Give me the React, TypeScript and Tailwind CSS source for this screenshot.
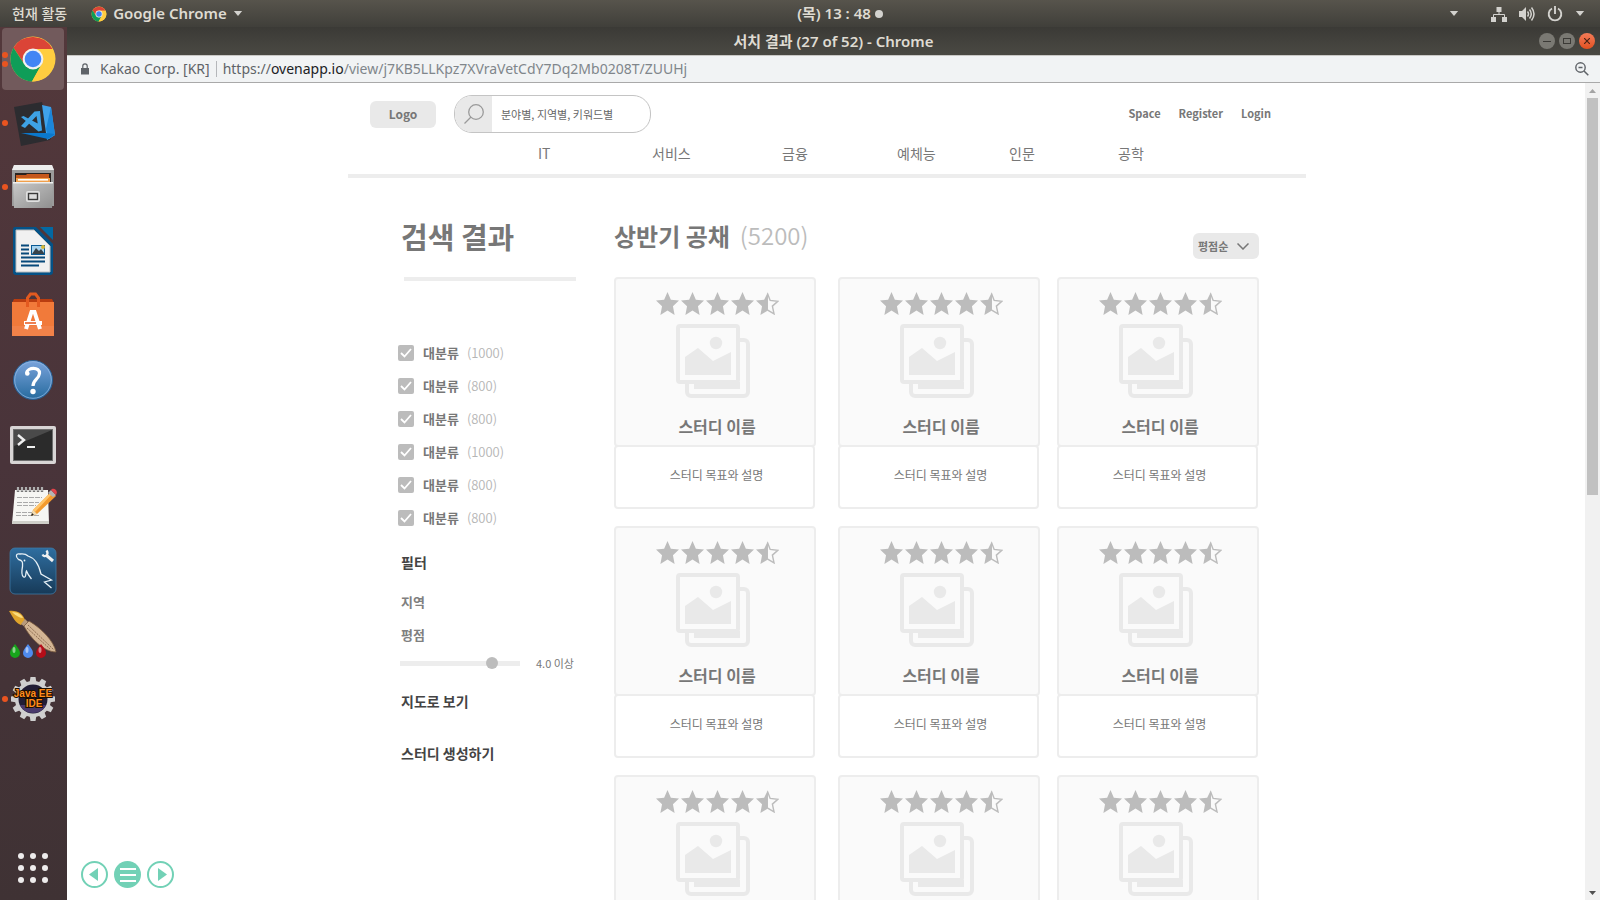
import { useState } from "react";

const kr = "font-['Noto_Sans_CJK_KR',sans-serif]";

/* ---------- launcher drawings, each on a 48 x 48 grid ---------- */

function ChromeIcon({ className }: { className: string }) {
  return (
    <svg viewBox="0 0 48 48" className={className} aria-hidden="true">
      <circle cx="24" cy="24" r="22.5" fill="#FFCD40" />
      <path d="M4.5 12.8A22.5 22.5 0 0 1 43.5 14H24a10.2 10.2 0 0 0-9.2 14.3z" fill="#DB4437" />
      <path d="M4.5 12.8A22.5 22.5 0 0 0 23 46.5L32.7 29a10.2 10.2 0 0 1-17.5 0z" fill="#0F9D58" />
      <path d="M32.8 29 23 46.5A22.5 22.5 0 0 0 43.5 14H24z" fill="#FFCD40" />
      <circle cx="24" cy="24" r="10.4" fill="#F1F1F1" />
      <circle cx="24" cy="24" r="8.3" fill="#4285F4" />
    </svg>
  );
}

function CodeIcon() {
  return (
    <svg viewBox="0 0 48 48" className="size-12" aria-hidden="true">
      <path d="M5 8 33 3l9 36-1 2L12 47z" fill="#2c2c30" />
      <path d="M33 6 42 8l4 28-8 5z" fill="#3fa2ea" />
      <path d="M42 8l4 28-6 4-3-10z" fill="#1b86d9" />
      <path d="M12 34h25l9 1-7 5z" fill="#0b78cc" />
      <path d="m12 18 2.500-1 18 9.500.5 5-3.500 1zM12 27l13.500-14.500L31 12l1.500 16-3 1-2-12L16 29z" fill="#3ea2e5" />
    </svg>
  );
}

function FilesIcon() {
  return (
    <svg viewBox="0 0 48 48" className="size-12" aria-hidden="true">
      <defs>
        <linearGradient id="drawer" x1="0" y1="0" x2="1" y2="1">
          <stop offset="0" stopColor="#c9c9c9" />
          <stop offset="1" stopColor="#8f8f8f" />
        </linearGradient>
      </defs>
      <path d="M5 2h38l2 5v36H3V7z" fill="#9b9b9b" />
      <path d="M5 2h38l2 5H3z" fill="#ededed" />
      <path d="M6 10h36v12H6z" fill="#2b2320" />
      <path d="M7 12h10l1-1h22v10H7z" fill="#c5571c" />
      <path d="M7 15h34v6H7z" fill="#f1a04c" />
      <path d="M9 16h30v1.6H9z" fill="#fff" />
      <path d="M4 19h40l-1 26H5z" fill="url(#drawer)" />
      <path d="M4 19h40v1.5H4z" fill="#f0f0f0" />
      <rect x="17" y="28" width="14" height="11" rx="2" fill="#e0e0e0" />
      <rect x="19.5" y="30.500" width="9" height="6" fill="#ddd" stroke="#3b3b3b" strokeWidth="1.4" />
    </svg>
  );
}

function WriterIcon() {
  return (
    <svg viewBox="0 0 48 48" className="size-12" aria-hidden="true">
      <path d="M6 0h21l17 17v28a3 3 0 0 1-3 3H7a3 3 0 0 1-3-3V2a2 2 0 0 1 2-2z" fill="#045287" />
      <path d="M31 0h13v13z" fill="#0369a3" />
      <path d="M7 3h18l16 16v26H7z" fill="#f1f1f1" stroke="#bbb" strokeWidth="1" />
      <path d="M12 18.500h8M12 22.500h8M12 26.500h8M12 30.500h24M12 34.500h24M12 38.500h18" stroke="#07497a" strokeWidth="2" />
      <path d="M22 18h14v10H22z" fill="#0a5a94" />
      <path d="M23 19h12v8H23z" fill="#a9d4ef" />
      <path d="m23 27 4-6 3 3 2-2 3 4v1z" fill="#37424a" />
      <circle cx="34" cy="20" r="2" fill="#d9b838" />
    </svg>
  );
}

function SoftwareIcon() {
  return (
    <svg viewBox="0 0 48 48" className="size-12" aria-hidden="true">
      <path d="M5 8h38l2 4H3z" fill="#b93d10" />
      <path d="M3 11h42v34H3z" fill="#f17a3a" />
      <path d="M3 35h42v10H3z" fill="#f28249" />
      <path d="M18.500 16V7l3-4h5l3 4v9" fill="none" stroke="#e35a20" strokeWidth="3" />
      <path d="m17 38 5.500-17h3L31 38M15 32h18" fill="none" stroke="#fff" strokeWidth="4" />
      <path d="M16 32h11" stroke="#e9612a" strokeWidth="1.600" />
    </svg>
  );
}

function HelpIcon() {
  return (
    <svg viewBox="0 0 48 48" className="size-12" aria-hidden="true">
      <defs>
        <linearGradient id="help" x1="0" y1="0" x2="0" y2="1">
          <stop offset="0" stopColor="#7aa3dc" />
          <stop offset="1" stopColor="#266b9e" />
        </linearGradient>
      </defs>
      <circle cx="24" cy="25" r="19.500" fill="url(#help)" stroke="#285f93" />
      <circle cx="24" cy="25" r="18.300" fill="none" stroke="#8fb6e2" strokeWidth=".8" />
      <path d="M17.500 18c1-6 13.500-6.500 13 .5-.5 5.500-6.500 6-6.500 12.500" fill="none" stroke="#fff" strokeWidth="3.200" />
      <circle cx="18.300" cy="18.500" r="2.300" fill="#fff" />
      <circle cx="24" cy="36.500" r="2.700" fill="#fff" />
    </svg>
  );
}

function TerminalIcon() {
  return (
    <svg viewBox="0 0 48 48" className="size-12" aria-hidden="true">
      <rect x="1" y="7" width="46" height="38" rx="2" fill="#d8d5d5" />
      <rect x="4.500" y="10.500" width="39" height="31" fill="#2b2b2b" stroke="#6d6d6d" />
      <path d="M5 11h38L5 27z" fill="#4a4a4a" />
      <path d="m9 16 6 5-6 5" fill="none" stroke="#f0f0f0" strokeWidth="2.400" />
      <path d="M18 28h8" stroke="#f0f0f0" strokeWidth="2" />
    </svg>
  );
}

function NotesIcon() {
  return (
    <svg viewBox="0 0 48 48" className="size-12" aria-hidden="true">
      <path d="M6 7h33l1 34H3z" fill="#f6f6f3" />
      <path d="M3 38h37v3H3z" fill="#cfcfc9" />
      <path d="M9 4v5M13 4v5M17 4v5M21 4v5M25 4v5M29 4v5M33 4v5" stroke="#777" strokeWidth="2.400" />
      <path d="M9 4v4M13 4v4M17 4v4M21 4v4M25 4v4M29 4v4M33 4v4" stroke="#e8e8e8" strokeWidth="1" />
      <path d="M8 14.500h25M8 19.500h22M8 22.500h19M7 29.500h16M7 32.500h24" stroke="#a9a9a9" strokeWidth="1" strokeDasharray="5 1" />
      <path d="m22 33 2-6L42 9l5 4-19 18z" fill="#f39a2e" />
      <path d="m24 27 18-18 1.500 1.500L26 29z" fill="#ffc56b" />
      <path d="m22 33 2-6 4 4z" fill="#f0dcb4" />
      <path d="m22 33 1-3 2 2z" fill="#222" />
      <path d="m39 10 3-3 5 5-3 2z" fill="#b5b5b5" />
      <path d="m42 7c2-3 8 0 5 5z" fill="#e2434a" />
    </svg>
  );
}

function DolphinIcon() {
  return (
    <svg viewBox="0 0 48 48" className="size-12" aria-hidden="true">
      <defs>
        <linearGradient id="sea" x1="0" y1="0" x2="0" y2="1">
          <stop offset="0" stopColor="#2f6ea0" />
          <stop offset="1" stopColor="#173a58" />
        </linearGradient>
      </defs>
      <rect x="1" y="1" width="46" height="46" rx="5" fill="url(#sea)" stroke="#3d78a5" strokeWidth=".8" />
      <path d="M9.500 12.500C6 9.500 7 6 11 7c4-.5 6 0 8 2 7 2 11 9 13 18l10.500 6-7 2 7 6M9.500 12.500c5 1 4 4 4 7-1 5-1 9 1 10.500 3 1 2-5 3-6 1 3 2.500 5 5 8" fill="none" stroke="#e6f0f6" strokeWidth="1.300" />
      <circle cx="15.500" cy="13.500" r=".9" fill="#e6f0f6" />
      <path d="m37 8 7 6" stroke="#f0f0f0" strokeWidth="3" />
      <path d="M33.500 7.500c2 4 7 0 4-4" fill="none" stroke="#f0f0f0" strokeWidth="2.200" />
    </svg>
  );
}

function BrushIcon() {
  return (
    <svg viewBox="0 0 48 52" className="h-[52px] w-12" aria-hidden="true">
      <path d="M0 2c9-1 14 3 16 9l-4 5C6 14 4 8 0 2z" fill="#e0a42b" />
      <path d="M3 3c6 0 10 3 11 6-3 0-7-2-11-6z" fill="#fbdc7e" />
      <path d="m12 15 4-5 4 4-4 4z" fill="#b89a7b" />
      <path d="M15 17 20 12c12 7 25 20 27 31-12 0-26-14-32-26z" fill="#d3b594" stroke="#7a5a3e" strokeWidth=".8" />
      <path d="m19 16 26 25M18 19l23 21" stroke="#8d6d51" strokeWidth="1" strokeDasharray="2 1" />
      <path d="M6 35c3 4 5 6 5 9a5 5 0 0 1-10 0c0-3 2-5 5-9z" fill="#17a51b" />
      <path d="M19 35c3 4 5 6 5 9a5 5 0 0 1-10 0c0-3 2-5 5-9z" fill="#4f8bee" />
      <path d="M32 35c3 4 5 6 5 9a5 5 0 0 1-10 0c0-3 2-5 5-9z" fill="#b50d18" />
      <g fill="#fff" opacity=".5">
        <ellipse cx="5" cy="41" rx="1.500" ry="3" />
        <ellipse cx="18" cy="41" rx="1.500" ry="3" />
        <ellipse cx="31" cy="41" rx="1.500" ry="3" />
      </g>
    </svg>
  );
}

function JavaIcon() {
  const teeth = [0, 30, 60, 90, 120, 150, 180, 210, 240, 270, 300, 330];
  return (
    <svg viewBox="0 0 48 48" className="size-12 overflow-visible" aria-hidden="true">
      {teeth.map((a) => (
        <path key={a} d="m20.500 8 1-6h5l1 6z" fill="#cfcfcf" transform={`rotate(${a} 24 24)`} />
      ))}
      <circle cx="24" cy="24" r="18" fill="#cfcfcf" />
      <circle cx="24" cy="24" r="14.500" fill="#211d35" />
      <path d="M11 30h26a14.500 14.500 0 0 1-26 0z" fill="#4a3a6c" />
      <g
        className="font-['Liberation_Sans',sans-serif]"
        fontSize="10"
        fontWeight="700"
        textAnchor="middle"
        fill="#ff8c1c"
        stroke="#1c0f00"
        strokeWidth="2"
        paintOrder="stroke"
      >
        <text x="24" y="22">Java EE</text>
        <text x="25" y="32">IDE</text>
      </g>
    </svg>
  );
}

const launchers = [
  { name: "Google Chrome", icon: <ChromeIcon className="size-12" />, dots: 2 },
  { name: "Visual Studio Code", icon: <CodeIcon />, dots: 1 },
  { name: "Files", icon: <FilesIcon />, dots: 1 },
  { name: "Writer", icon: <WriterIcon />, dots: 0 },
  { name: "Software", icon: <SoftwareIcon />, dots: 0 },
  { name: "Help", icon: <HelpIcon />, dots: 0 },
  { name: "Terminal", icon: <TerminalIcon />, dots: 0 },
  { name: "Text Editor", icon: <NotesIcon />, dots: 0 },
  { name: "MySQL Workbench", icon: <DolphinIcon />, dots: 0 },
  { name: "Paint", icon: <BrushIcon />, dots: 0 },
  { name: "Eclipse", icon: <JavaIcon />, dots: 1 },
];

/* ---------- desktop chrome ---------- */

function Caret() {
  return (
    <svg viewBox="0 0 10 6" className="h-[5px] w-[10px]" aria-hidden="true">
      <path d="M0 0h10L5 6z" fill="#d3d2ce" />
    </svg>
  );
}

function TopBar() {
  return (
    <header className="grid h-[27px] shrink-0 grid-cols-3 items-center bg-linear-to-b from-[#57544c] to-[#403f3a] px-3 font-['Noto_Sans','Noto_Sans_CJK_KR',sans-serif] text-[15px] font-semibold text-[#dfdbd2]">
      <div className="flex items-center gap-6">
        <button className="text-[14px] font-medium">현재 활동</button>
        <button className="flex items-center gap-[6px]">
          <ChromeIcon className="size-4" />
          <span>Google Chrome</span>
          <Caret />
        </button>
      </div>
      <button className="flex items-center justify-center gap-1 pl-[80px]">
        <span>(목) 13 : 48</span>
        <span className="size-2 rounded-full bg-[#d3d2ce]" />
      </button>
      <div className="flex items-center justify-end gap-3 pr-[3px]">
        <Caret />
        <span className="w-2" />
        <svg viewBox="0 0 16 16" className="size-4" fill="#d3d2ce" aria-hidden="true">
          <path d="M5.500 1h5v5h-5zM0 11h5v5H0zM11 11h5v5h-5z" />
          <path d="M8 6v3M2.500 11V8.500h11V11" fill="none" stroke="#d3d2ce" />
        </svg>
        <svg viewBox="0 0 16 16" className="size-4" aria-hidden="true">
          <path d="M0 5h3l4-4v14l-4-4H0z" fill="#d3d2ce" />
          <path d="M8.500 5.500q2 2.500 0 5M10.500 3.500q3.500 4.500 0 9M12.500 1.500q5 6.500 0 13" fill="none" stroke="#d3d2ce" strokeWidth="1.500" />
        </svg>
        <svg viewBox="0 0 16 16" className="size-4" aria-hidden="true">
          <path d="M5 2.500a6.300 6.300 0 1 0 6 0M8 0v8" fill="none" stroke="#d3d2ce" strokeWidth="1.900" />
        </svg>
        <Caret />
      </div>
    </header>
  );
}

function Launcher() {
  return (
    <nav aria-label="Launcher" className="flex w-[67px] shrink-0 flex-col bg-linear-to-b from-[#53383b] via-[#49343a] to-[#3f3234] pr-px">
      <div className="flex flex-col">
        {launchers.map((l, i) => (
          <button
            key={l.name}
            aria-label={l.name}
            className={
              i === 0
                ? "relative mx-[2px] my-[1px] flex h-[62px] items-center justify-center rounded bg-[#725a5c]"
                : "relative mx-[2px] flex h-16 items-center justify-center"
            }
          >
            <span className="absolute left-0 flex flex-col gap-[3px]">
              {Array.from({ length: l.dots }, (_, d) => (
                <span key={d} className="size-[6px] rounded-full bg-[#e95420]" />
              ))}
            </span>
            {l.icon}
          </button>
        ))}
      </div>
      <button aria-label="Show applications" className="mt-auto mb-[17px] grid grid-cols-3 gap-[6px] self-center">
        {Array.from({ length: 9 }, (_, d) => (
          <span key={d} className="size-[6px] rounded-full bg-[#eeecec]" />
        ))}
      </button>
    </nav>
  );
}

function TitleBar() {
  return (
    <div className="grid h-7 shrink-0 grid-cols-[1fr_auto_1fr] items-center bg-linear-to-b from-[#3b3a36] to-[#4a4943] font-['Noto_Sans','Noto_Sans_CJK_KR',sans-serif] text-[15px] font-semibold text-[#dfdbd2]">
      <h1 className="col-start-2">서치 결과 (27 of 52) - Chrome</h1>
      <div className="flex justify-end gap-1 pr-[5px]">
        <button aria-label="Minimize" className="flex size-4 items-center justify-center rounded-full bg-[#7a7973]">
          <span className="h-px w-2 bg-[#3b3a36]" />
        </button>
        <button aria-label="Maximize" className="flex size-4 items-center justify-center rounded-full bg-[#7a7973]">
          <span className="h-[6px] w-2 border border-[#3b3a36]" />
        </button>
        <button aria-label="Close" className="flex size-4 items-center justify-center rounded-full bg-linear-to-b from-[#f37b57] to-[#e2501d]">
          <svg viewBox="0 0 6 6" className="size-[6px]" aria-hidden="true">
            <path d="m0 0 6 6M6 0 0 6" stroke="#4a2314" strokeWidth="1.200" />
          </svg>
        </button>
      </div>
    </div>
  );
}

function AddressBar() {
  return (
    <div className="flex h-7 shrink-0 items-center border-t border-b border-t-[#c9c8c5] border-b-[#a9a9a9] bg-[#f1f3f4] pr-[11px] pb-px pl-[14px] font-['Noto_Sans',sans-serif] text-[14px] text-[#5f6368]">
      <svg viewBox="0 0 8 12" className="h-3 w-2" aria-hidden="true">
        <path d="M0 5h8v6.500H0z" fill="#5f6368" />
        <path d="M1.800 5V3a2.200 2.200 0 0 1 4.400 0v2" fill="none" stroke="#5f6368" strokeWidth="1.200" />
      </svg>
      <span className="ml-[11px]">Kakao Corp. [KR]</span>
      <span className="mx-[6px] h-4 w-px bg-[#b5b7ba]" />
      <span>https://<span className="text-[#202124]">ovenapp.io</span><span className="text-[#80868b]">/view/j7KB5LLKpz7XVraVetCdY7Dq2Mb0208T/ZUUHj</span></span>
      <button aria-label="Zoom" className="ml-auto">
        <svg viewBox="0 0 14 14" className="size-[14px]" aria-hidden="true" fill="none" stroke="#5f6368">
          <circle cx="5.500" cy="5.500" r="4.700" strokeWidth="1.400" />
          <path d="M3.500 5.500h4M9 9l4.300 4.300" strokeWidth="1.500" />
        </svg>
      </button>
    </div>
  );
}

function Scrollbar() {
  return (
    <div className="flex w-[15px] shrink-0 flex-col items-center bg-[#f1f1f1]">
      <svg viewBox="0 0 15 15" className="size-[15px]" aria-hidden="true">
        <path d="M4 10h7l-3.500-4z" fill="#a3a3a3" />
      </svg>
      <div className="h-[397px] w-[11px] bg-[#c1c1c1]" />
      <svg viewBox="0 0 15 15" className="mt-auto size-[15px]" aria-hidden="true">
        <path d="M4 6h7l-3.500 4z" fill="#505050" />
      </svg>
    </div>
  );
}

/* ---------- the page ---------- */

const star = "M12 0l3.500 8 8.500.9-6.300 5.900L19.400 24 12 19.300 4.600 24l1.700-9.200L0 8.900 8.500 8z";

function Stars() {
  return (
    <div role="img" aria-label="4.5" className="flex gap-[2px]">
      {[0, 1, 2, 3].map((n) => (
        <svg key={n} viewBox="0 0 24 24" className="size-[23px]" aria-hidden="true">
          <path d={star} fill="#bcbcbc" />
        </svg>
      ))}
      <svg viewBox="0 0 24 24" className="size-[23px]" aria-hidden="true">
        <path d="M12.500 0v19.300L4.600 24l1.700-9.200L0 8.900 8.500 8z" fill="#bcbcbc" />
        <path d="M12 1.500 14.800 8.800l8 .9-5.700 5 1.700 8.100-6.600-4" fill="none" stroke="#bcbcbc" strokeWidth="1.500" />
      </svg>
    </div>
  );
}

function Pictures() {
  return (
    <svg viewBox="0 0 74 74" className="size-[74px]" aria-hidden="true">
      <path d="M62 16h6a4 4 0 0 1 4 4v48a4 4 0 0 1-4 4H15a4 4 0 0 1-4-4v-8" fill="none" stroke="#e9e9e9" strokeWidth="4" />
      <path d="M18 58h46v7H18z" fill="#e9e9e9" />
      <rect x="2" y="2" width="60" height="56" rx="2" fill="#fafafa" stroke="#e9e9e9" strokeWidth="4" />
      <path d="M9 33l13-9 15 13 18-9v23H9z" fill="#e9e9e9" />
      <circle cx="40" cy="19" r="6.200" fill="#e9e9e9" />
    </svg>
  );
}

function StudyCard() {
  return (
    <article className="w-[202px]">
      <div className="flex h-[170px] flex-col items-center rounded border-2 border-[#ededed] bg-[#fafafa] pt-[13px]">
        <div className="ml-1"><Stars /></div>
        <div className="mt-[9px] -ml-1"><Pictures /></div>
        <h3 className="mt-4 ml-1 text-[16px] leading-6 font-bold text-[#777]">스터디 이름</h3>
      </div>
      <div className="-mt-[2px] mr-px flex h-[64px] items-center justify-center rounded border-2 border-[#ededed] pb-1 pl-1 text-[12px] text-[#777]">
        스터디 목표와 설명
      </div>
    </article>
  );
}

const categories = [1000, 800, 800, 1000, 800, 800];

function Sidebar() {
  const [checked, setChecked] = useState(categories.map(() => true));
  const [score, setScore] = useState(40);
  return (
    <aside className="w-[213px] shrink-0">
      <h2 className="text-[29px] leading-[40px] font-bold text-[#777]">검색 결과</h2>
      <div className="mt-[21px] ml-[3px] h-1 w-[172px] bg-[#ededed]" />
      <ul className="mt-[55px] -ml-[3px]">
        {categories.map((count, i) => (
          <li key={i} className="flex h-[33px] items-center">
            <label className="flex items-center">
              <input
                type="checkbox"
                checked={checked[i]}
                onChange={() => setChecked(checked.map((c, j) => (j === i ? !c : c)))}
                className="peer sr-only"
              />
              <span className="flex size-4 items-center justify-center rounded-[2px] bg-[#bcbcbc] text-transparent peer-checked:text-white">
                <svg viewBox="0 0 12 10" className="h-[10px] w-3" aria-hidden="true">
                  <path d="m1 5 3.500 3.500L11 1" fill="none" stroke="currentColor" strokeWidth="1.800" />
                </svg>
              </span>
              <span className="ml-[9px] text-[13px] font-bold text-[#777]">대분류</span>
              <span className="ml-2 text-[13px] font-[350] text-[#b5b5b5]">({count})</span>
            </label>
          </li>
        ))}
      </ul>
      <h3 className="mt-[18px] text-[14px] leading-5 font-bold text-[#444]">필터</h3>
      <p className="mt-5 text-[13px] leading-5 font-bold text-[#808080]">지역</p>
      <label htmlFor="score" className="mt-[13px] block text-[13px] leading-5 font-bold text-[#808080]">평점</label>
      <div className="mt-2 -ml-px flex h-5 items-center gap-4">
        <input
          id="score"
          type="range"
          min={0}
          max={50}
          value={score}
          onChange={(e) => setScore(Number(e.target.value))}
          className="h-[5px] w-[120px] appearance-none bg-[#ededed] [&::-webkit-slider-thumb]:size-3 [&::-webkit-slider-thumb]:appearance-none [&::-webkit-slider-thumb]:rounded-full [&::-webkit-slider-thumb]:bg-[#bcbcbc]"
        />
        <output htmlFor="score" className="text-[11px] text-[#777]">{(score / 10).toFixed(1)} 이상</output>
      </div>
      <a href="#map" className="mt-[18px] block text-[14px] leading-5 font-bold text-[#444]">지도로 보기</a>
      <a href="#create" className="mt-8 block text-[14px] leading-5 font-bold text-[#444]">스터디 생성하기</a>
    </aside>
  );
}

function PageHeader() {
  return (
    <header className="border-b-4 border-[#ededed] pt-3">
      <div className="flex h-[38px] items-center pr-[35px] pl-[22px]">
        <a href="#home" className="flex h-[27px] w-[66px] items-center justify-center rounded-md bg-[#e9e9e9] text-[12px] font-bold text-[#777]">Logo</a>
        <label className="ml-[18px] flex h-[38px] w-[197px] overflow-hidden rounded-[18px] border border-[#c4c4c4] bg-white">
          <span className="flex w-[37px] items-center justify-center bg-[#e9e9e9]">
            <svg viewBox="0 0 20 20" className="size-5" aria-hidden="true" fill="none" stroke="#9a9a9a" strokeWidth="1.300">
              <circle cx="12" cy="8" r="7.300" />
              <path d="m7 13-6.500 6.500" />
            </svg>
          </span>
          <input
            aria-label="검색"
            defaultValue="분야별, 지역별, 키워드별"
            className="min-w-0 flex-1 px-[9px] text-[11px] text-[#666] outline-none"
          />
        </label>
        <nav className="ml-auto flex gap-[18px] pb-[2px] text-[11px] font-bold text-[#777]">
          <a href="#space">Space</a>
          <a href="#register">Register</a>
          <a href="#login">Login</a>
        </nav>
      </div>
      <nav className="grid h-[41px] grid-cols-[114px_130px_115px_112px_109px_auto] items-center pl-[190px] text-[14px] text-[#777]">
        <a href="#it">IT</a>
        <a href="#service">서비스</a>
        <a href="#finance">금융</a>
        <a href="#arts">예체능</a>
        <a href="#humanities">인문</a>
        <a href="#engineering">공학</a>
      </nav>
    </header>
  );
}

function Results() {
  return (
    <section className="flex-1">
      <div className="flex h-[61px] items-start">
        <h2 className="text-[24px] leading-[40px] font-bold text-[#777]">상반기 공채</h2>
        <span className="ml-[10px] text-[24px] leading-[38px] font-[350] text-[#bcbcbc]">(5200)</span>
        <div className="relative mt-[17px] mr-[47px] ml-auto flex items-center">
          <select aria-label="정렬" className="h-[26px] w-[66px] appearance-none rounded-md bg-[#e9e9e9] pl-[5px] text-[11px] leading-5 font-bold text-[#777]">
            <option>평점순</option>
          </select>
          <svg viewBox="0 0 12 7" className="pointer-events-none absolute right-[10px] h-[7px] w-3" aria-hidden="true">
            <path d="m.5.500 5.500 5.500L11.500.5" fill="none" stroke="#777" strokeWidth="1.500" />
          </svg>
        </div>
      </div>
      <div className="grid grid-cols-[224px_219px_202px] gap-y-[17px]">
        {Array.from({ length: 9 }, (_, i) => (
          <StudyCard key={i} />
        ))}
      </div>
    </section>
  );
}

function PageControls() {
  const ring = "flex size-[27px] items-center justify-center rounded-full border-2 border-[#72d1b6]";
  return (
    <div className="absolute bottom-3 left-[14px] flex gap-[6px]">
      <button aria-label="Previous" className={ring}>
        <svg viewBox="0 0 9 13" className="mr-[3px] h-[13px] w-[9px]" aria-hidden="true">
          <path d="M9 0v13L0 6.500z" fill="#72d1b6" />
        </svg>
      </button>
      <button aria-label="Menu" className="flex size-[27px] flex-col items-center justify-center gap-1 rounded-full bg-[#72d1b6]">
        <span className="h-[2px] w-4 bg-white" />
        <span className="h-[2px] w-4 bg-white" />
        <span className="h-[2px] w-4 bg-white" />
      </button>
      <button aria-label="Next" className={ring}>
        <svg viewBox="0 0 9 13" className="ml-[3px] h-[13px] w-[9px]" aria-hidden="true">
          <path d="M0 0v13l9-6.500z" fill="#72d1b6" />
        </svg>
      </button>
    </div>
  );
}

export default function App() {
  return (
    <div className="flex h-screen flex-col overflow-hidden bg-white">
      <TopBar />
      <div className="flex min-h-0 flex-1">
        <Launcher />
        <div className="flex min-w-0 flex-1 flex-col">
          <TitleBar />
          <AddressBar />
          <div className="flex min-h-0 flex-1">
            <main className={`relative min-w-0 flex-1 overflow-hidden pl-[2px] ${kr}`}>
              <div className="mx-auto max-w-[958px]">
                <PageHeader />
                <div className="flex pt-[38px] pl-[53px]">
                  <Sidebar />
                  <Results />
                </div>
              </div>
              <PageControls />
            </main>
            <Scrollbar />
          </div>
        </div>
      </div>
    </div>
  );
}
